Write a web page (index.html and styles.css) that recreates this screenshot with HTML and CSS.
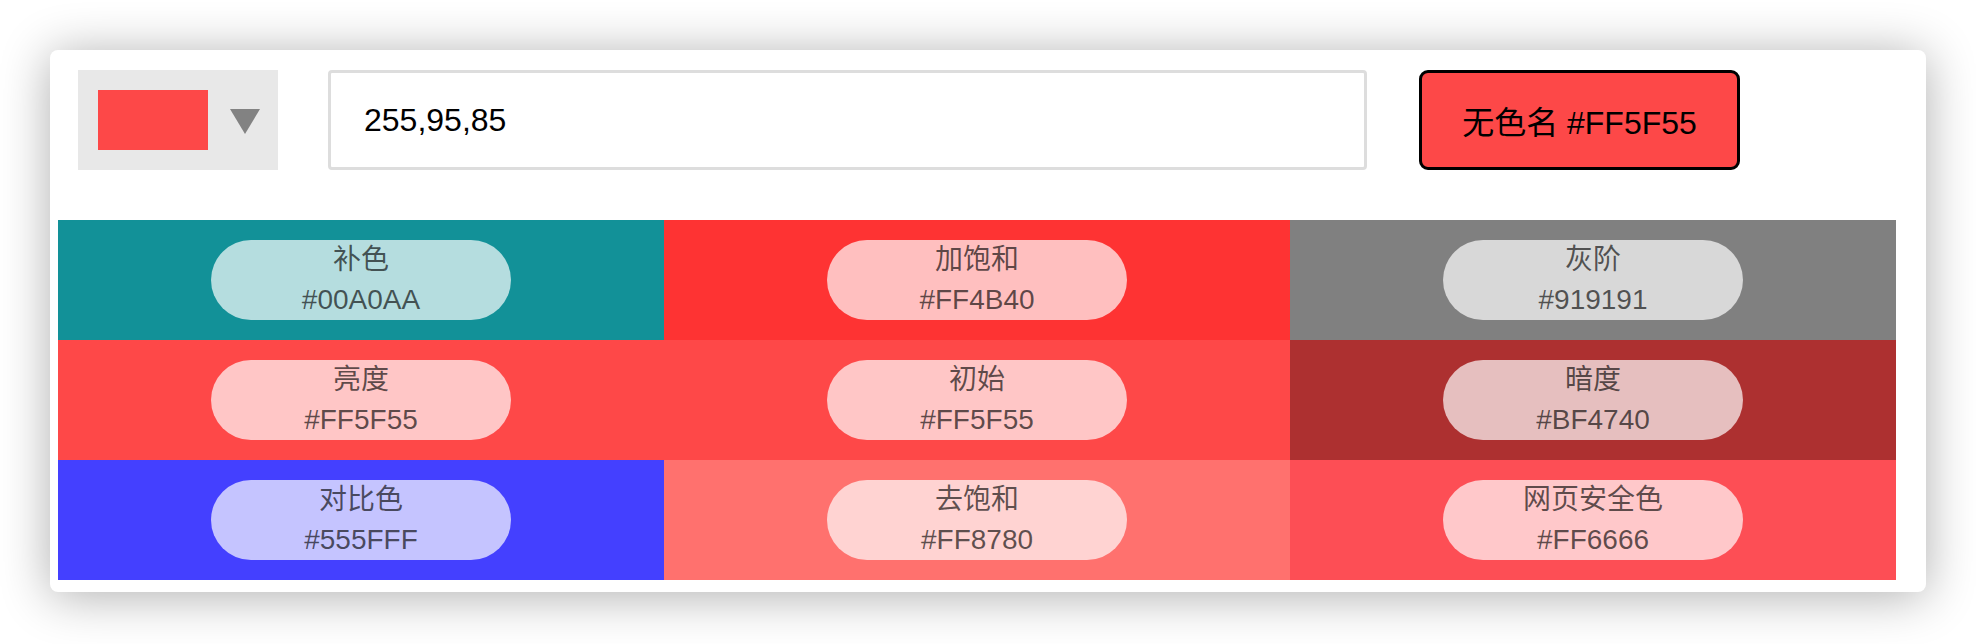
FILE: index.html
```html
<!DOCTYPE html>
<html lang="zh">
<head>
<meta charset="utf-8">
<title>颜色</title>
<link rel="stylesheet" href="styles.css">
</head>
<body>
<div class="card">
  <div class="header">
    <div class="picker">
      <div class="swatch"></div>
      <div class="caret"></div>
    </div>
    <div class="input">255,95,85</div>
    <div class="name-btn">无色名 #FF5F55</div>
  </div>
  <div class="grid">
    <div class="cell c-teal"><div class="pill"><div>补色</div><div>#00A0AA</div></div></div>
    <div class="cell c-sat"><div class="pill"><div>加饱和</div><div>#FF4B40</div></div></div>
    <div class="cell c-gray"><div class="pill"><div>灰阶</div><div>#919191</div></div></div>
    <div class="cell c-base"><div class="pill"><div>亮度</div><div>#FF5F55</div></div></div>
    <div class="cell c-base"><div class="pill"><div>初始</div><div>#FF5F55</div></div></div>
    <div class="cell c-dark"><div class="pill"><div>暗度</div><div>#BF4740</div></div></div>
    <div class="cell c-blue"><div class="pill"><div>对比色</div><div>#555FFF</div></div></div>
    <div class="cell c-desat"><div class="pill"><div>去饱和</div><div>#FF8780</div></div></div>
    <div class="cell c-web"><div class="pill"><div>网页安全色</div><div>#FF6666</div></div></div>
  </div>
</div>
</body>
</html>
```

FILE: styles.css
```css
* { box-sizing: border-box; }
html, body { margin: 0; background: #fff; }
body {
  padding: 50px 50px 52px 50px;
  font-family: "Liberation Sans", "Noto Sans CJK SC", sans-serif;
}
.card {
  background: #fff;
  border-radius: 8px;
  box-shadow: 0 4px 50px rgba(0,0,0,0.32);
  padding: 20px 29px 12px 8px;
}
.header {
  display: flex;
  align-items: center;
  height: 100px;
  margin-left: 20px;
}
.picker {
  width: 200px;
  height: 100px;
  background: #e8e8e8;
  display: flex;
  align-items: center;
  padding-left: 20px;
}
.swatch {
  width: 110px;
  height: 60px;
  background: #fd4848;
}
.caret {
  margin-left: 22px;
  width: 0;
  height: 0;
  border-left: 15px solid transparent;
  border-right: 15px solid transparent;
  border-top: 25px solid #828282;
  margin-top: 2px;
}
.input {
  margin-left: 50px;
  width: 1039px;
  height: 100px;
  border: 3px solid #dddddd;
  border-radius: 4px;
  padding-left: 33px;
  display: flex;
  align-items: center;
  font-size: 32px;
  color: #000;
}
.name-btn {
  margin-left: 52px;
  width: 321px;
  height: 100px;
  border: 3px solid #000;
  border-radius: 9px;
  background: #fd4848;
  display: flex;
  align-items: center;
  justify-content: center;
  font-size: 32px;
  color: #000;
}
.grid {
  margin-top: 50px;
  display: grid;
  grid-template-columns: 606px 626px 606px;
  grid-auto-rows: 120px;
}
.cell {
  display: flex;
  justify-content: center;
  padding-top: 20px;
}
.pill {
  width: 300px;
  height: 80px;
  border-radius: 40px;
  background: rgba(255,255,255,0.69);
  color: rgba(0,0,0,0.64);
  font-size: 28px;
  line-height: 40px;
  text-align: center;
}
.c-teal { background: #129198; }
.c-sat { background: #fe3333; }
.c-gray { background: #808080; }
.c-base { background: #fe4848; }
.c-dark { background: #ad3030; }
.c-blue { background: #4440ff; }
.c-desat { background: #ff716e; }
.c-web { background: #fd4e55; }
```
